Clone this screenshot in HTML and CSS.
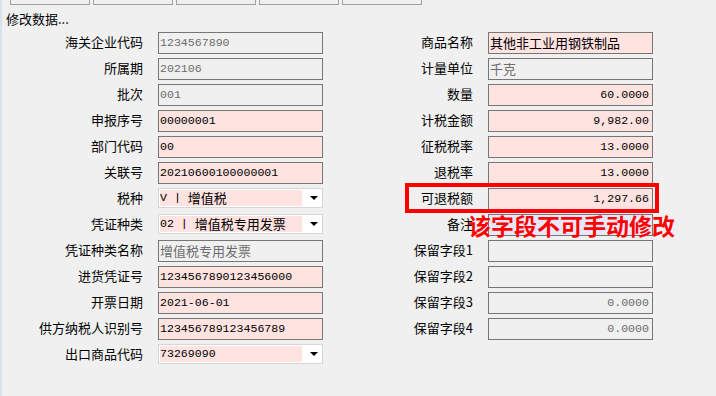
FILE: index.html
```html
<!DOCTYPE html>
<html lang="zh-CN">
<head>
    <meta charset="UTF-8">
    <meta name="viewport" content="width=device-width, initial-scale=1.0">
    <title>修改数据</title>
    <link rel="stylesheet" href="styles.css">
</head>
<body>
    <div class="toolbar">
        <div class="tool-btn"></div>
        <div class="tool-btn"></div>
        <div class="tool-btn"></div>
        <div class="tool-btn"></div>
        <div class="tool-btn"></div>
    </div>
    <div class="title">修改数据...</div>
    <div class="form">
        <div class="col left">
            <div class="row"><label>海关企业代码</label><div class="field ro">1234567890</div></div>
            <div class="row"><label>所属期</label><div class="field ro">202106</div></div>
            <div class="row"><label>批次</label><div class="field ro">001</div></div>
            <div class="row"><label>申报序号</label><div class="field edit">00000001</div></div>
            <div class="row"><label>部门代码</label><div class="field edit">00</div></div>
            <div class="row"><label>关联号</label><div class="field edit">20210600100000001</div></div>
            <div class="row"><label>税种</label>
                <div class="combo"><span class="combo-text">V | <span class="cn">增值税</span></span><span class="arrow"></span></div>
            </div>
            <div class="row"><label>凭证种类</label>
                <div class="combo"><span class="combo-text">02 | <span class="cn">增值税专用发票</span></span><span class="arrow"></span></div>
            </div>
            <div class="row"><label>凭证种类名称</label><div class="field ro"><span class="cn">增值税专用发票</span></div></div>
            <div class="row"><label>进货凭证号</label><div class="field edit">1234567890123456000</div></div>
            <div class="row"><label>开票日期</label><div class="field edit">2021-06-01</div></div>
            <div class="row"><label>供方纳税人识别号</label><div class="field edit">123456789123456789</div></div>
            <div class="row"><label>出口商品代码</label>
                <div class="combo"><span class="combo-text">73269090</span><span class="arrow"></span></div>
            </div>
        </div>
        <div class="col right">
            <div class="row"><label>商品名称</label><div class="field edit"><span class="cn">其他非工业用钢铁制品</span></div></div>
            <div class="row"><label>计量单位</label><div class="field ro"><span class="cn">千克</span></div></div>
            <div class="row"><label>数量</label><div class="field edit num">60.0000</div></div>
            <div class="row"><label>计税金额</label><div class="field edit num">9,982.00</div></div>
            <div class="row"><label>征税税率</label><div class="field edit num">13.0000</div></div>
            <div class="row"><label>退税率</label><div class="field edit num">13.0000</div></div>
            <div class="row marked"><label>可退税额</label><div class="field edit num">1,297.66</div>
                <div class="red-box"></div>
            </div>
            <div class="row marked"><label>备注</label><div class="field note"></div>
                <div class="red-note">该字段不可手动修改</div>
            </div>
            <div class="row"><label>保留字段1</label><div class="field ro"></div></div>
            <div class="row"><label>保留字段2</label><div class="field ro"></div></div>
            <div class="row"><label>保留字段3</label><div class="field ro num">0.0000</div></div>
            <div class="row"><label>保留字段4</label><div class="field ro num">0.0000</div></div>
        </div>
    </div>
</body>
</html>
```

FILE: styles.css
```css
body {
    margin: 0;
    width: 714px;
    height: 396px;
    overflow: hidden;
    background-color: #f0f0f0;
    border-left: 2px solid #d9e3ed;
    font-family: "Noto Sans CJK SC", sans-serif;
    font-size: 13px;
    color: #000;
}

.toolbar {
    display: flex;
    gap: 3px;
    padding-left: 8px;
    height: 5px;
}

.tool-btn {
    width: 78px;
    height: 4px;
    border: 1px solid #a0a0a0;
    border-top: none;
}

.title {
    padding-left: 4px;
    margin-top: 5px;
    height: 22px;
    line-height: 18px;
}

.form {
    display: flex;
}

.col {
    display: flex;
    flex-direction: column;
    gap: 4px;
}

.row {
    display: flex;
    align-items: center;
    gap: 15px;
    height: 22px;
    position: relative;
}

.row label {
    text-align: right;
    white-space: nowrap;
    line-height: 18px;
    margin-top: -2px;
}

.left label {
    width: 141px;
}

.right label {
    width: 150px;
}

.field {
    box-sizing: border-box;
    width: 165px;
    height: 22px;
    border: 1px solid #767676;
    padding: 0 3px 0 1px;
    font-family: "Liberation Mono", "Noto Sans CJK SC", monospace;
    font-size: 11.6px;
    line-height: 19px;
    white-space: nowrap;
    overflow: hidden;
}

.cn {
    font-family: "Noto Sans CJK SC", sans-serif;
    font-size: 13px;
}

.ro {
    background-color: #f0f0f0;
    color: #6d6d6d;
}

.edit {
    background-color: #ffe3e1;
}

.note {
    background-color: #e7e7fa;
}

.num {
    text-align: right;
}

.combo {
    box-sizing: border-box;
    width: 165px;
    height: 20px;
    margin-top: -3px;
    border: 1px solid #d6d6d6;
    background-color: #fff;
    display: flex;
    align-items: center;
    padding: 1px;
}

.combo-text {
    background-color: #ffe3e1;
    width: 142px;
    height: 16px;
    display: flex;
    align-items: center;
    font-family: "Liberation Mono", "Noto Sans CJK SC", monospace;
    font-size: 11.6px;
    white-space: pre;
}

.combo-text .cn {
    line-height: 16px;
}

.arrow {
    margin-left: 8px;
    width: 0;
    height: 0;
    border-left: 4px solid transparent;
    border-right: 4px solid transparent;
    border-top: 4px solid #000;
}

.red-box {
    position: absolute;
    left: 82px;
    top: -5px;
    width: 246px;
    height: 22px;
    border: 4px solid #ff0000;
}

.red-note {
    position: absolute;
    left: 145px;
    top: -2px;
    color: #ff0000;
    font-size: 23px;
    font-weight: bold;
    line-height: 26px;
    white-space: nowrap;
}
```
